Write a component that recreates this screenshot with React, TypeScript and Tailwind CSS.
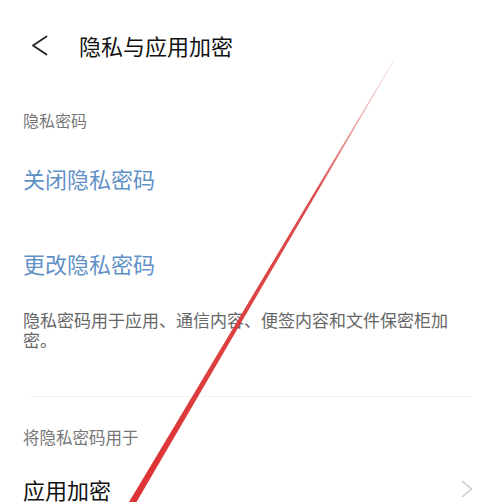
const cjk = { fontFamily: '"Noto Sans CJK SC", "Noto Sans", sans-serif' };

function RedStroke() {
  // annotation line drawn over the screenshot
  return (
    <svg
      className="absolute inset-0 pointer-events-none"
      width="500"
      height="502"
      viewBox="0 0 500 502"
    >
      <defs>
        <linearGradient id="stroke" x1="0" y1="58" x2="0" y2="502" gradientUnits="userSpaceOnUse">
          <stop offset="0" stopColor="#eab0b0" stopOpacity="0.4" />
          <stop offset="0.3" stopColor="#d83838" stopOpacity="0.9" />
          <stop offset="1" stopColor="#dd3336" />
        </linearGradient>
      </defs>
      <polygon points="394.8,58 395.6,58 136.5,502 129,502" fill="url(#stroke)" />
    </svg>
  );
}

export default function App() {
  return (
    <div className="relative w-[500px] h-[502px] overflow-hidden bg-white" style={cjk}>
      <div className="flex items-center h-[56px] mt-[17px]">
        <svg className="ml-[31px] shrink-0" width="17" height="21" viewBox="0 0 17 21" fill="none">
          <path d="M15.5 1.5 L2 10.5 L15.5 19.5" stroke="#222" strokeWidth="1.8" strokeLinecap="round" strokeLinejoin="round" />
        </svg>
        <span className="ml-[31px] text-[22px] leading-[30px] text-[#111]">隐私与应用加密</span>
      </div>

      <div className="px-[23px]">
        <div className="mt-[37px] text-[16px] leading-[20px] text-[#777]">隐私密码</div>
        <div className="mt-[33px] text-[22px] leading-[30px] text-[#5f91c7]">关闭隐私密码</div>
        <div className="mt-[55px] text-[22px] leading-[30px] text-[#5f91c7]">更改隐私密码</div>
        <p className="mt-[32px] w-[432px] text-[17px] leading-[20px] text-[#666]">
          隐私密码用于应用、通信内容、便签内容和文件保密柜加密。
        </p>
      </div>

      <div className="mt-[46px] ml-[30px] w-[442px] h-px bg-[#f2f2f2]" />

      <div className="px-[23px]">
        <div className="mt-[30px] text-[16.5px] leading-[20px] text-[#777]">将隐私密码用于</div>
        <div className="mt-[27px] flex items-center justify-between">
          <span className="text-[22px] leading-[30px] text-[#111]">应用加密</span>
          <svg className="mr-[4px] shrink-0" width="12" height="18" viewBox="0 0 12 18" fill="none">
            <path d="M1.5 1.5 L10.5 9 L1.5 16.5" stroke="#c6c6c6" strokeWidth="1.4" strokeLinecap="round" strokeLinejoin="round" />
          </svg>
        </div>
      </div>

      <RedStroke />
    </div>
  );
}
